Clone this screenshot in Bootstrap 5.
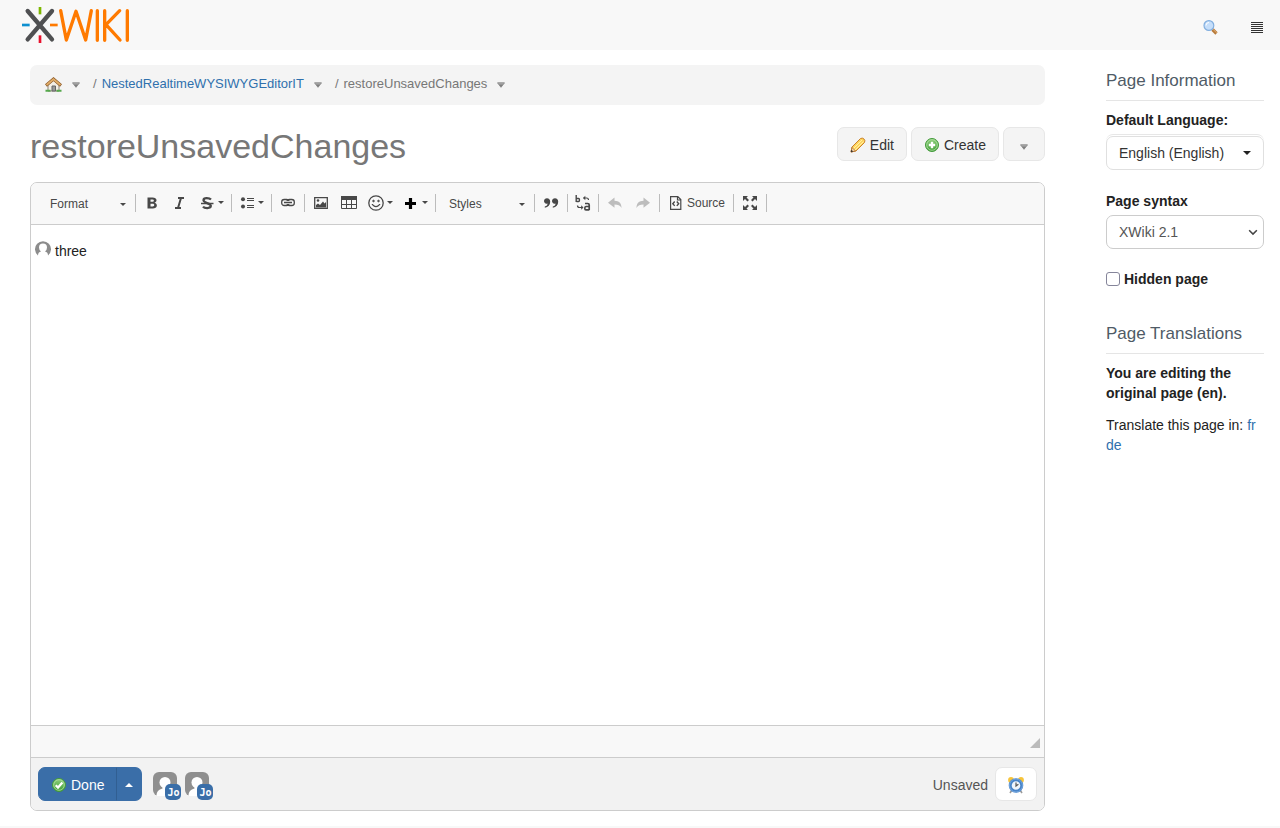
<!DOCTYPE html>
<html lang="en">
<head>
<meta charset="utf-8">
<meta name="viewport" content="width=device-width, initial-scale=1">
<title>restoreUnsavedChanges - XWiki</title>
<link rel="stylesheet" href="https://cdn.jsdelivr.net/npm/bootstrap@5.3.0/dist/css/bootstrap.min.css">
<style>
:root { --xw-blue: #3a6ea8; --xw-link: #2f70ad; --xw-line: #ccc; --xw-radius: 7px; }
body { font: 14px/20px "Liberation Sans", Arial, sans-serif; color: #222; background: #fff; }
a { color: var(--xw-link); text-decoration: none; }
svg { display: block; flex: none; }
.xw-header { height: 50px; background: #f8f8f8; padding: 0 16px 0 22px; }
.xw-header button { background: none; border: 0; padding: 0; }
.xw-content { min-width: 0; padding: 15px 21px 15px 30px; }
.xw-aside { width: 214px; flex: none; padding: 20px 16px 15px 40px; }
.xw-crumbs { height: 40px; background: #f4f4f4; border-radius: var(--xw-radius); padding: 0 15px; font-size: 13px; color: #777; }
.xw-crumbs ol { list-style: none; margin: 0; padding: 0; }
.xw-crumbs li { display: flex; align-items: center; }
.xw-crumbs li + li::before { content: "/"; padding: 0 5px 0 13px; margin-top: -3px; }
.xw-crumbs .txt { margin-top: -3px; }
.xw-arrow { background: none; border: 0; padding: 0; margin-left: 10px; }
.xw-titlebar { margin: 17px 0 16px; }
.xw-title { font-size: 34px; line-height: 40px; font-weight: 400; color: #777; margin: 0; padding-top: 4px; }
.xw-btn { --bs-btn-font-size: 14px; --bs-btn-line-height: 20px; --bs-btn-padding-y: 5px; --bs-btn-padding-x: 12px;
  --bs-btn-color: #333; --bs-btn-bg: #f4f4f4; --bs-btn-border-color: #e7e7e7; --bs-btn-hover-bg: #e8e8e8; --bs-btn-border-radius: var(--xw-radius);
  display: inline-flex; align-items: center; height: 34px; padding-top: 7px; }
.xw-editor { border: 1px solid var(--xw-line); border-radius: var(--xw-radius); overflow: hidden; }
.xw-tools { min-height: 42px; background: #f8f8f8; border-bottom: 1px solid var(--xw-line); padding: 0 8px 2px; font-size: 12px; color: #484848; }
.xw-tools button { width: 28px; height: 28px; padding: 0; border: 0; background: none; color: #484848; display: flex; align-items: center; justify-content: center; }
.xw-tools .menu { width: 35px; gap: 3px; padding-right: 1px; }
.xw-tools .combo { width: 94px; padding: 3px 7px 0 11px; justify-content: space-between; }
.xw-tools .tight { width: 26px; }
.xw-tools .labelled { width: 69px; gap: 3px; padding-top: 1px; }
.xw-tools button:disabled { color: #bdbdbd; }
.xw-tools .menu::after, .xw-tools .combo::after { content: ""; border: 3px solid transparent; border-top-color: #484848; border-bottom: 0; }
.xw-sep { width: 1px; height: 18px; background: #bcbcbc; margin: 0 2px; }
.xw-text { height: 500px; padding: 16px 4px; outline: 0; }
.xw-status { height: 33px; background: #f8f8f8; border-top: 1px solid var(--xw-line); border-bottom: 1px solid var(--xw-line); padding: 0 4px 9px 0; }
.xw-actions { height: 52px; background: #f2f2f2; padding: 0 7px; color: #555; }
.xw-primary { --bs-btn-color: #fff; --bs-btn-bg: var(--xw-blue); --bs-btn-border-color: var(--xw-blue); --bs-btn-hover-color: #fff; --bs-btn-hover-bg: #30608f; }
.xw-primary + .xw-primary { --bs-btn-padding-x: 8px; border-left-color: #315f92; }
.xw-up { border: 4px solid transparent; border-bottom-color: #fff; border-top: 0; }
.xw-users { margin-left: 11px; }
.xw-user { position: relative; width: 24px; height: 24px; }
.xw-user span { position: absolute; left: 12px; top: 12px; width: 16px; height: 16px; border-radius: 5px; background: var(--xw-blue); color: #fff; font: bold 10px/17px "DejaVu Sans Mono", monospace; text-align: center; }
.xw-state { padding: 2px 7px 0 0; }
.xw-history { --bs-btn-bg: #fff; --bs-btn-padding-x: 11px; }
.xw-head { font-size: 17px; line-height: 20px; font-weight: 400; color: #4f5b66; border-bottom: 1px solid #e5e5e5; padding: 1px 0 9px; margin: 0 0 9px; }
.xw-head-next { margin-top: 34px; }
.xw-aside label { font-weight: 700; }
.xw-aside .form-select { height: 34px; font-size: 14px; line-height: 20px; padding: 6px 30px 6px 12px; border-radius: var(--xw-radius); color: #555; border-color: var(--xw-line);
  background: #fff url("data:image/svg+xml,%3Csvg xmlns='http://www.w3.org/2000/svg' viewBox='0 0 8 6'%3E%3Cpath d='M.7 1l3.3 3.4L7.3 1' fill='none' stroke='%23444' stroke-width='1.3'/%3E%3C/svg%3E") no-repeat right 5px center / 10px 7px; }
.xw-lang { border-top: 1px solid #e7e7e7; border-radius: var(--xw-radius); padding-top: 1px; margin: 4px 0 21px; }
.xw-aside .xw-lang .form-select { color: #333; border-color: #e0e0e0;
  background-image: url("data:image/svg+xml,%3Csvg xmlns='http://www.w3.org/2000/svg' viewBox='0 0 8 4'%3E%3Cpath d='M0 0h8L4 4z' fill='%23222'/%3E%3C/svg%3E"); background-size: 8px 4px; background-position: right 12px center; }
.xw-aside .form-check-input { width: 14px; height: 14px; margin: 0; border: 1px solid #85859a; border-radius: 3px; flex: none; }
.xw-footer { background: #f8f8f8; height: 2px; }
</style>
</head>
<body>
<svg class="position-absolute" width="0" height="0" aria-hidden="true">
  <defs>
    <linearGradient id="gArrow" x2="0" y2="1"><stop stop-color="#bbb"/><stop offset="1" stop-color="#555"/></linearGradient>
    <linearGradient id="gGreen" x2="0" y2="1"><stop stop-color="#8fd07c"/><stop offset="1" stop-color="#3f9e35"/></linearGradient>
    <symbol id="down" viewBox="0 0 8 6"><path d="M.5.8h7L4 5.3z" fill="url(#gArrow)" stroke="#888" stroke-width=".9" stroke-linejoin="round"/></symbol>
    <symbol id="user" viewBox="0 0 24 24"><rect width="24" height="24" rx="6" fill="#8f8f8f"/><circle cx="12" cy="10.500" r="5.500" fill="#fff"/><path d="M3.500 24c0-4.500 2-6.500 6-7.500V14h5v2.500c4 1 6 3 6 7.500z" fill="#fff"/></symbol>
  </defs>
</svg>

<header class="xw-header d-flex align-items-center justify-content-between">
  <a href="#" aria-label="XWiki">
    <svg width="108" height="36" viewBox="66 21 324 108" fill="none" stroke-linecap="round" stroke-linejoin="round">
      <path d="M83 33l73 85M156 33l-73 85" stroke="#4f5052" stroke-width="13"/>
      <g stroke-width="8" stroke-linecap="butt"><path d="M120 21v22" stroke="#7db700"/><path d="M120 106v23" stroke="#e8112d"/><path d="M66 75h23" stroke="#0d8fd0"/><path d="M150 75h23" stroke="#ff7a00"/></g>
      <path d="M182 32l17 88 29-86 29 86 17-88M292 32v89M314 32v89M359 32l-41 42 42 46M382 32v89" stroke="#ff7a00" stroke-width="10"/>
    </svg>
  </a>
  <div class="d-flex align-items-center pt-1">
    <button type="button" aria-label="Search" class="me-4 pe-2">
      <svg width="16" height="16" viewBox="0 0 16 16"><path d="M10.500 10.500l4 4" stroke="#b5793a" stroke-width="3.200"/><path d="M11 10.300l3.600 3.600" stroke="#e9b070"/><circle cx="6.900" cy="6.500" r="4.900" fill="#c5defa" stroke="#83afdf" stroke-width="1.200"/><path d="M4 6.500a3 3 0 0 1 3-3" stroke="#fff" fill="none"/></svg>
    </button>
    <button type="button" aria-label="Menu">
      <svg width="14" height="12" viewBox="0 0 14 12"><path d="M1 1.500h12M1 3.500h12M1 5.500h12M1 7.500h12M1 9.500h12M1 11.500h12" stroke="#333" /></svg>
    </button>
  </div>
</header>

<div class="d-flex">
  <main class="xw-content flex-grow-1">
    <nav class="xw-crumbs d-flex align-items-center" aria-label="breadcrumb">
      <ol class="d-flex">
        <li><a href="#" aria-label="Home">
          <svg width="17" height="16" viewBox="0 0 17 16"><path d="M3 8v6h11V8L8.500 3z" fill="#f3eee5" stroke="#8d8378"/><path d="M7 14V9h3.500v5z" fill="#999" stroke="#666"/><path d="M1 8.500L8.500 2 16 8.500" fill="none" stroke="#8c5a28" stroke-width="3"/><path d="M1.500 8L8.500 2.200 15.500 8" fill="none" stroke="#e0ac68" stroke-width="1.800"/><path d="M.5 13.700h5M11.500 13.700h5" stroke="#55a84c" stroke-width="2"/></svg></a>
          <button type="button" class="xw-arrow" aria-label="Home menu"><svg width="8" height="6"><use href="#down"/></svg></button></li>
        <li><a class="txt" href="#">NestedRealtimeWYSIWYGEditorIT</a><button type="button" class="xw-arrow" aria-label="Space menu"><svg width="8" height="6"><use href="#down"/></svg></button></li>
        <li><span class="txt">restoreUnsavedChanges</span><button type="button" class="xw-arrow" aria-label="Page menu"><svg width="8" height="6"><use href="#down"/></svg></button></li>
      </ol>
    </nav>

    <div class="xw-titlebar d-flex justify-content-between align-items-center">
      <h1 class="xw-title">restoreUnsavedChanges</h1>
      <div class="d-flex gap-1">
        <button type="button" class="btn xw-btn">
          <svg class="me-1" width="16" height="16" viewBox="0 0 16 16"><path d="M1 15l1-5 8.500-8.500q2-1 3.500.5t.5 3.500L6 14z" fill="#ffd45c" stroke="#c9822c"/><path d="M3.500 11.500L12 3M5 13l8.500-8.500" stroke="#fff0a8"/><path d="M2 10.500L5.500 14 1 15z" fill="#f6d7ac" stroke="#a5642a" stroke-width=".7"/><path d="M.8 15.200l.6-2.500 1.900 1.900z" fill="#333"/></svg>Edit</button>
        <button type="button" class="btn xw-btn">
          <svg class="me-1" width="16" height="16" viewBox="0 0 16 16"><circle cx="8" cy="8" r="6.500" fill="url(#gGreen)" stroke="#439a3b"/><circle cx="8" cy="8" r="5.300" fill="none" stroke="#b3dfa6" stroke-width=".8"/><path d="M8 4.800v6.400M4.800 8h6.400" stroke="#fff" stroke-width="2.400"/></svg>Create</button>
        <button type="button" class="btn xw-btn px-3" aria-label="More actions"><svg class="mt-1" width="8" height="6"><use href="#down"/></svg></button>
      </div>
    </div>

    <section class="xw-editor">
      <div class="xw-tools d-flex flex-wrap align-items-center" role="toolbar" aria-label="Editor toolbar">
        <button type="button" class="combo">Format</button>
        <span class="xw-sep"></span>
        <button type="button" aria-label="Bold"><svg width="16" height="16" viewBox="0 0 16 16"><path d="M3.500 2.500h5c5 0 5 4.300 2 5.200 3.600 1 3.200 5.800-1.700 5.800H3.500zm3 2v2.300h2c1.900 0 1.900-2.300 0-2.300zm0 4.200v2.700h2.200c2.100 0 2.100-2.700 0-2.700z" fill="currentColor" fill-rule="evenodd"/></svg></button>
        <button type="button" aria-label="Italic"><svg width="16" height="16" viewBox="0 0 16 16"><path d="M6 3h6M3 13h6M9 3L6 13" stroke="currentColor" stroke-width="2" fill="none"/></svg></button>
        <button type="button" class="menu" aria-label="Strikethrough"><svg width="16" height="16" viewBox="0 0 16 16" fill="none" stroke="currentColor"><path d="M12 4.500C10.500 3 4.500 2.300 4.500 5.300S11.800 7.800 11.800 10.800 5.500 13.500 4 11.600" stroke-width="2.300"/><path d="M2 8.500h12.500" stroke-width="1.500"/></svg></button>
        <span class="xw-sep"></span>
        <button type="button" class="menu" aria-label="List"><svg width="16" height="16" viewBox="0 0 16 16"><g fill="currentColor"><circle cx="4" cy="4.300" r="2"/><circle cx="4" cy="11.500" r="2"/></g><path d="M8 3.500h7M8 5.500h7M8 10.500h7M8 12.500h7" stroke="currentColor"/></svg></button>
        <span class="xw-sep"></span>
        <button type="button" aria-label="Link"><svg width="16" height="16" viewBox="0 0 16 16" fill="none" stroke="currentColor" stroke-width="1.300"><rect x="1.700" y="4.500" width="7.300" height="6" rx="2.500"/><rect x="7" y="4.500" width="7.300" height="6" rx="2.500"/><path d="M4 7.500h8" stroke="#f8f8f8" stroke-width="3"/><path d="M4 7.500h8" stroke-width="1.600"/></svg></button>
        <span class="xw-sep"></span>
        <button type="button" aria-label="Image"><svg width="16" height="16" viewBox="0 0 16 16"><path d="M1.700 2.700h12.600v10.600H1.700z" fill="none" stroke="currentColor" stroke-width="1.300"/><circle cx="5" cy="5.500" r="1.300" fill="currentColor"/><path d="M3 12.500V10l2-1.500 2 1.500 3-3.500 1.500 2L13 7v5.500z" fill="currentColor"/></svg></button>
        <button type="button" aria-label="Table"><svg width="16" height="16" viewBox="0 0 16 16"><path d="M0 1h16v4H0z" fill="currentColor"/><path d="M.5 4.500v9h15v-9M.5 9.500h15M5.500 5v9M10.500 5v9" fill="none" stroke="currentColor"/></svg></button>
        <button type="button" class="menu" aria-label="Emoji"><svg width="16" height="16" viewBox="0 0 16 16" fill="none" stroke="currentColor"><circle cx="8" cy="8" r="7.200" stroke-width="1.300"/><path d="M4.500 9.500q3.500 4.300 7 0M3.800 9.500h1.500M10.700 9.500h1.500" stroke-width="1.200"/><circle cx="5.500" cy="6" r=".8" fill="currentColor"/><circle cx="10.500" cy="6" r=".8" fill="currentColor"/></svg></button>
        <button type="button" class="menu" aria-label="Insert"><svg width="16" height="16" viewBox="0 0 16 16"><path d="M7.500 3v11M2 8.500h11" stroke="#000" stroke-width="3.200"/></svg></button>
        <span class="xw-sep"></span>
        <button type="button" class="combo">Styles</button>
        <span class="xw-sep"></span>
        <button type="button" aria-label="Quote"><svg width="16" height="16" viewBox="0 0 16 16" fill="currentColor"><path id="q" d="M4 3.200c2 0 3.200 1.400 3.200 3.600 0 3.300-2 5.500-5.400 6v-1.300c1.900-.5 2.700-1.500 2.800-3C2.500 9.200 1 7.800 1 6.100 1 4.400 2.300 3.200 4 3.200z"/><use href="#q" x="8"/></svg></button>
        <span class="xw-sep"></span>
        <button type="button" class="tight" aria-label="Language"><svg width="16" height="16" viewBox="0 0 16 16" fill="none" stroke="currentColor"><path d="M1.200 0v7M1.500 3.500h2q1 0 1 1.500t-1 1.500h-2" stroke-width="1.400"/><path d="M10 8.500h2.700q1.500 0 1.500 1.500v5.300M14 11.500h-3q-1.200 0-1.200 1.700t1.200 1.700h3" stroke-width="1.700"/><path d="M8.500 3h3q2 0 2 2M2.500 10.500q0 2 2 2h2.500" stroke-width="1.200"/><path d="M10.300.8L8 3l2.300 2.200zM6.200 10.300l2.300 2.200-2.300 2.200z" fill="currentColor" stroke="none"/></svg></button>
        <span class="xw-sep"></span>
        <button type="button" aria-label="Undo" disabled><svg width="16" height="16" viewBox="0 0 16 16"><path id="undo" d="M7.500 2.500v3.200c4.500.1 7 2.300 7 7.300-1.500-2.600-3.500-3.400-7-3.400v3.200L1 7.700z" fill="currentColor"/></svg></button>
        <button type="button" aria-label="Redo" disabled><svg width="16" height="16" viewBox="0 0 16 16"><use href="#undo" transform="matrix(-1 0 0 1 16 0)"/></svg></button>
        <span class="xw-sep"></span>
        <button type="button" class="labelled"><svg width="16" height="16" viewBox="0 0 16 16" fill="none" stroke="currentColor" stroke-width="1.200"><path d="M2.600 1.600h7.200l3 3v9.800H2.600zM9.500 1.600V5h3.300"/><path d="M6.700 6.500L4.800 8.700l1.900 2.200M8.800 6.500l1.900 2.200-1.900 2.200" stroke-width="1.400"/></svg>Source</button>
        <span class="xw-sep"></span>
        <button type="button" aria-label="Maximize"><svg width="16" height="16" viewBox="0 0 16 16"><g fill="currentColor"><path id="mx" d="M1 1h5L4.500 2.500l2.500 2.500-1.500 1.500L3 4 1 6z"/><use href="#mx" transform="matrix(-1 0 0 1 16 0)"/><use href="#mx" transform="matrix(1 0 0 -1 0 16)"/><use href="#mx" transform="matrix(-1 0 0 -1 16 16)"/></g></svg></button>
        <span class="xw-sep"></span>
      </div>
      <div class="xw-text" contenteditable="true" role="textbox" aria-label="Page content" spellcheck="false"><p class="d-flex gap-1 m-0"><svg width="16" height="16" viewBox="0 0 16 16"><path d="M3 14.500a8 8 0 1 1 10 0c0-2.500-1-3.200-3-4q2-1.500 2-4a4 4 0 0 0-8 0q0 2.500 2 4c-2 .8-3 1.500-3 4z" fill="#8c8c8c"/></svg>three</p></div>
      <div class="xw-status d-flex justify-content-end align-items-end"><svg width="10" height="10" viewBox="0 0 10 10"><path d="M10 0v10H0z" fill="#bbb"/></svg></div>
      <div class="xw-actions d-flex align-items-center">
        <div class="btn-group">
          <button type="button" class="btn xw-btn xw-primary"><svg class="me-1" width="16" height="16" viewBox="0 0 16 16"><circle cx="8" cy="8" r="6.500" fill="url(#gGreen)" stroke="#439a3b"/><circle cx="8" cy="8" r="5.300" fill="none" stroke="#b3dfa6" stroke-width=".8"/><path d="M4.700 8.200l2.300 2.400 4.400-5" stroke="#fff" stroke-width="2.200" fill="none"/></svg>Done</button>
          <button type="button" class="btn xw-btn xw-primary" aria-label="More save options"><span class="xw-up"></span></button>
        </div>
        <div class="xw-users d-flex gap-2">
          <div class="xw-user"><svg width="24" height="24"><use href="#user"/></svg><span>Jo</span></div>
          <div class="xw-user"><svg width="24" height="24"><use href="#user"/></svg><span>Jo</span></div>
        </div>
        <span class="xw-state ms-auto">Unsaved</span>
        <button type="button" class="btn xw-btn xw-history" aria-label="History"><svg width="18" height="18" viewBox="0 0 18 18"><path d="M5 14l-2 3M13 14l2 3" stroke="#999" stroke-width="1.600"/><circle cx="4" cy="4" r="2.900" fill="#f7c43a"/><circle cx="14" cy="4" r="2.900" fill="#f7c43a"/><circle cx="9" cy="9.500" r="5.800" fill="#eef5fc" stroke="#4784c9" stroke-width="3"/><circle cx="9" cy="9.500" r="6.500" fill="none" stroke="#89b5e5" stroke-width=".7"/><path d="M9 6.500v3.500l2.400-1.700" fill="none" stroke="#555" stroke-width="1.200"/></svg></button>
      </div>
    </section>
  </main>

  <aside class="xw-aside">
    <h2 class="xw-head">Page Information</h2>
    <label for="lang">Default Language:</label>
    <div class="xw-lang"><select id="lang" class="form-select"><option>English (English)</option></select></div>
    <label for="syntax">Page syntax</label>
    <select id="syntax" class="form-select mt-1"><option>XWiki 2.1</option></select>
    <div class="d-flex align-items-center gap-1 mt-3 pt-1"><input class="form-check-input" type="checkbox" id="hidden"><label for="hidden">Hidden page</label></div>
    <h2 class="xw-head xw-head-next">Page Translations</h2>
    <p class="fw-bold mb-2 pb-1">You are editing the original page (en).</p>
    <p class="m-0">Translate this page in: <a href="#">fr</a> <a href="#">de</a></p>
  </aside>
</div>
<footer class="xw-footer"></footer>
<script src="https://cdn.jsdelivr.net/npm/bootstrap@5.3.0/dist/js/bootstrap.bundle.min.js"></script>
</body>
</html>
